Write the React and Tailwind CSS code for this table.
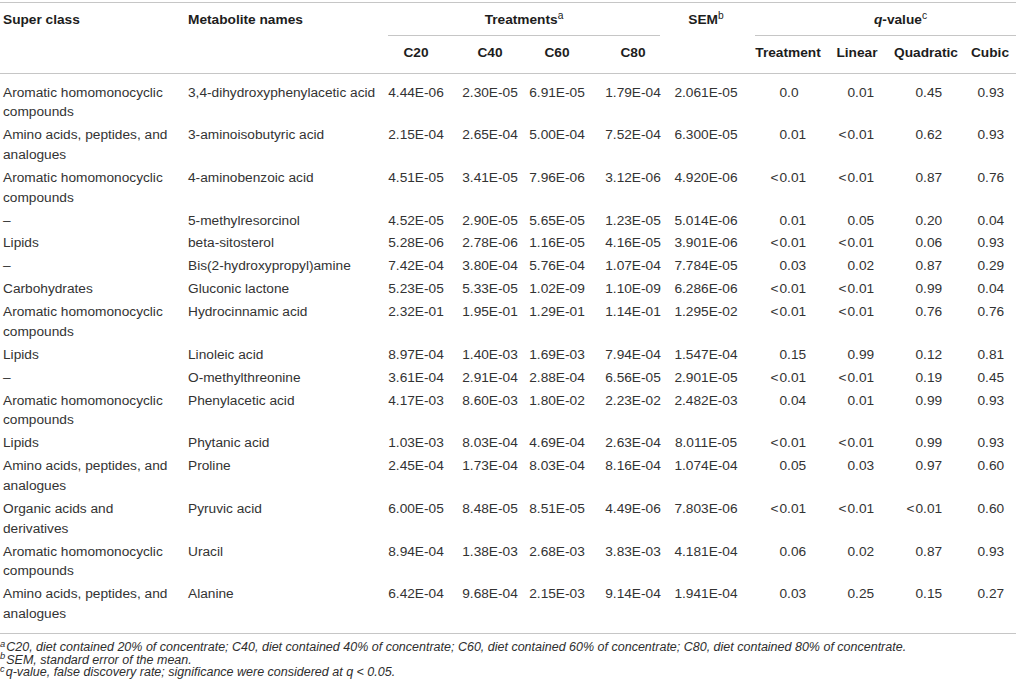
const COLS =
  "grid grid-cols-[188px_192px_72px_68px_74px_78px_68px_96px_42px_92px_46px]";

const ROWS = [
  ["Aromatic homomonocyclic compounds", "3,4-dihydroxyphenylacetic acid", "4.44E-06", "2.30E-05", "6.91E-05", "1.79E-04", "2.061E-05", "0.0", "0.01", "0.45", "0.93"],
  ["Amino acids, peptides, and analogues", "3-aminoisobutyric acid", "2.15E-04", "2.65E-04", "5.00E-04", "7.52E-04", "6.300E-05", "0.01", "<0.01", "0.62", "0.93"],
  ["Aromatic homomonocyclic compounds", "4-aminobenzoic acid", "4.51E-05", "3.41E-05", "7.96E-06", "3.12E-06", "4.920E-06", "<0.01", "<0.01", "0.87", "0.76"],
  ["–", "5-methylresorcinol", "4.52E-05", "2.90E-05", "5.65E-05", "1.23E-05", "5.014E-06", "0.01", "0.05", "0.20", "0.04"],
  ["Lipids", "beta-sitosterol", "5.28E-06", "2.78E-06", "1.16E-05", "4.16E-05", "3.901E-06", "<0.01", "<0.01", "0.06", "0.93"],
  ["–", "Bis(2-hydroxypropyl)amine", "7.42E-04", "3.80E-04", "5.76E-04", "1.07E-04", "7.784E-05", "0.03", "0.02", "0.87", "0.29"],
  ["Carbohydrates", "Gluconic lactone", "5.23E-05", "5.33E-05", "1.02E-09", "1.10E-09", "6.286E-06", "<0.01", "<0.01", "0.99", "0.04"],
  ["Aromatic homomonocyclic compounds", "Hydrocinnamic acid", "2.32E-01", "1.95E-01", "1.29E-01", "1.14E-01", "1.295E-02", "<0.01", "<0.01", "0.76", "0.76"],
  ["Lipids", "Linoleic acid", "8.97E-04", "1.40E-03", "1.69E-03", "7.94E-04", "1.547E-04", "0.15", "0.99", "0.12", "0.81"],
  ["–", "O-methylthreonine", "3.61E-04", "2.91E-04", "2.88E-04", "6.56E-05", "2.901E-05", "<0.01", "<0.01", "0.19", "0.45"],
  ["Aromatic homomonocyclic compounds", "Phenylacetic acid", "4.17E-03", "8.60E-03", "1.80E-02", "2.23E-02", "2.482E-03", "0.04", "0.01", "0.99", "0.93"],
  ["Lipids", "Phytanic acid", "1.03E-03", "8.03E-04", "4.69E-04", "2.63E-04", "8.011E-05", "<0.01", "<0.01", "0.99", "0.93"],
  ["Amino acids, peptides, and analogues", "Proline", "2.45E-04", "1.73E-04", "8.03E-04", "8.16E-04", "1.074E-04", "0.05", "0.03", "0.97", "0.60"],
  ["Organic acids and derivatives", "Pyruvic acid", "6.00E-05", "8.48E-05", "8.51E-05", "4.49E-06", "7.803E-06", "<0.01", "<0.01", "<0.01", "0.60"],
  ["Aromatic homomonocyclic compounds", "Uracil", "8.94E-04", "1.38E-03", "2.68E-03", "3.83E-03", "4.181E-04", "0.06", "0.02", "0.87", "0.93"],
  ["Amino acids, peptides, and analogues", "Alanine", "6.42E-04", "9.68E-04", "2.15E-03", "9.14E-04", "1.941E-04", "0.03", "0.25", "0.15", "0.27"],
];

// q-values line up on the decimal point, "<" hangs off to the left
function QVal({ v }) {
  const lt = v.startsWith("<");
  return (
    <span className="inline-block w-[27px] text-left whitespace-nowrap">
      {lt && <span className="-ml-[9px] mr-[1px]">&lt;</span>}
      {lt ? v.slice(1) : v}
    </span>
  );
}

function DataRow({ row }) {
  const [cls, name, c20, c40, c60, c80, sem, tr, lin, quad, cub] = row;
  return (
    <div className={`${COLS} py-[1.7px]`}>
      <div className="pl-[3px] pr-[15px]">{cls}</div>
      <div>{name}</div>
      <div className="text-center">{c20}</div>
      <div className="text-center pl-[8px]">{c40}</div>
      <div className="text-center">{c60}</div>
      <div className="text-center">{c80}</div>
      <div className="text-center">{sem}</div>
      <div className="text-center pl-[10px]"><QVal v={tr} /></div>
      <div className="text-center pl-[8px]"><QVal v={lin} /></div>
      <div className="text-center pl-[10px]"><QVal v={quad} /></div>
      <div className="text-center pl-[2px] pr-[6px]"><QVal v={cub} /></div>
    </div>
  );
}

export default function App() {
  return (
    <div className="w-[1016px] min-h-[694px] bg-white pt-[2px] font-['Liberation_Sans',Arial,Helvetica,sans-serif] text-[13.7px] leading-[19.6px] text-[#333]">
      <div className={`${COLS} border-t border-b border-[#c6c6c6] font-bold text-[#1d1d1d]`}>
        <div className="row-span-2 pl-[3px] pt-[6.7px]">Super class</div>
        <div className="row-span-2 pt-[6.7px]">Metabolite names</div>
        <div className="col-span-4 ml-[8px] mr-[12px] border-b border-[#c6c6c6] pt-[6.7px] pb-[5.7px] text-center">
          Treatments<sup className="font-normal">a</sup>
        </div>
        <div className="row-span-2 pt-[6.7px] text-center">
          SEM<sup className="font-normal">b</sup>
        </div>
        <div className="col-span-4 ml-[15px] border-b border-[#c6c6c6] pt-[6.7px] pb-[5.7px] pl-[30px] text-center">
          <i>q</i>-value<sup className="font-normal">c</sup>
        </div>
        <div className="pt-[7.2px] pb-[10.2px] text-center">C20</div>
        <div className="pt-[7.2px] pb-[10.2px] pl-[8px] text-center">C40</div>
        <div className="pt-[7.2px] pb-[10.2px] text-center">C60</div>
        <div className="pt-[7.2px] pb-[10.2px] text-center">C80</div>
        <div className="pt-[7.2px] pb-[10.2px] text-center">Treatment</div>
        <div className="pt-[7.2px] pb-[10.2px] text-center">Linear</div>
        <div className="pt-[7.2px] pb-[10.2px] pl-[4px] text-center">Quadratic</div>
        <div className="pt-[7.2px] pb-[10.2px] pr-[6px] text-center">Cubic</div>
      </div>

      <div className="pt-[7.2px] pb-[8px] border-b border-[#c6c6c6]">
        {ROWS.map((r, i) => (
          <DataRow key={i} row={r} />
        ))}
      </div>

      <div className="pt-[7.4px] text-[12.5px] leading-[12.5px] italic text-[#2e2e2e]">
        <p>
          <sup className="mr-[1px]">a</sup>C20, diet contained 20% of concentrate; C40, diet contained 40% of concentrate; C60, diet contained 60% of concentrate; C80, diet contained 80% of concentrate.
        </p>
        <p>
          <sup className="mr-[1px]">b</sup>SEM, standard error of the mean.
        </p>
        <p>
          <sup className="mr-[1px]">c</sup>q-value, false discovery rate; significance were considered at q &lt; 0.05.
        </p>
      </div>
    </div>
  );
}
